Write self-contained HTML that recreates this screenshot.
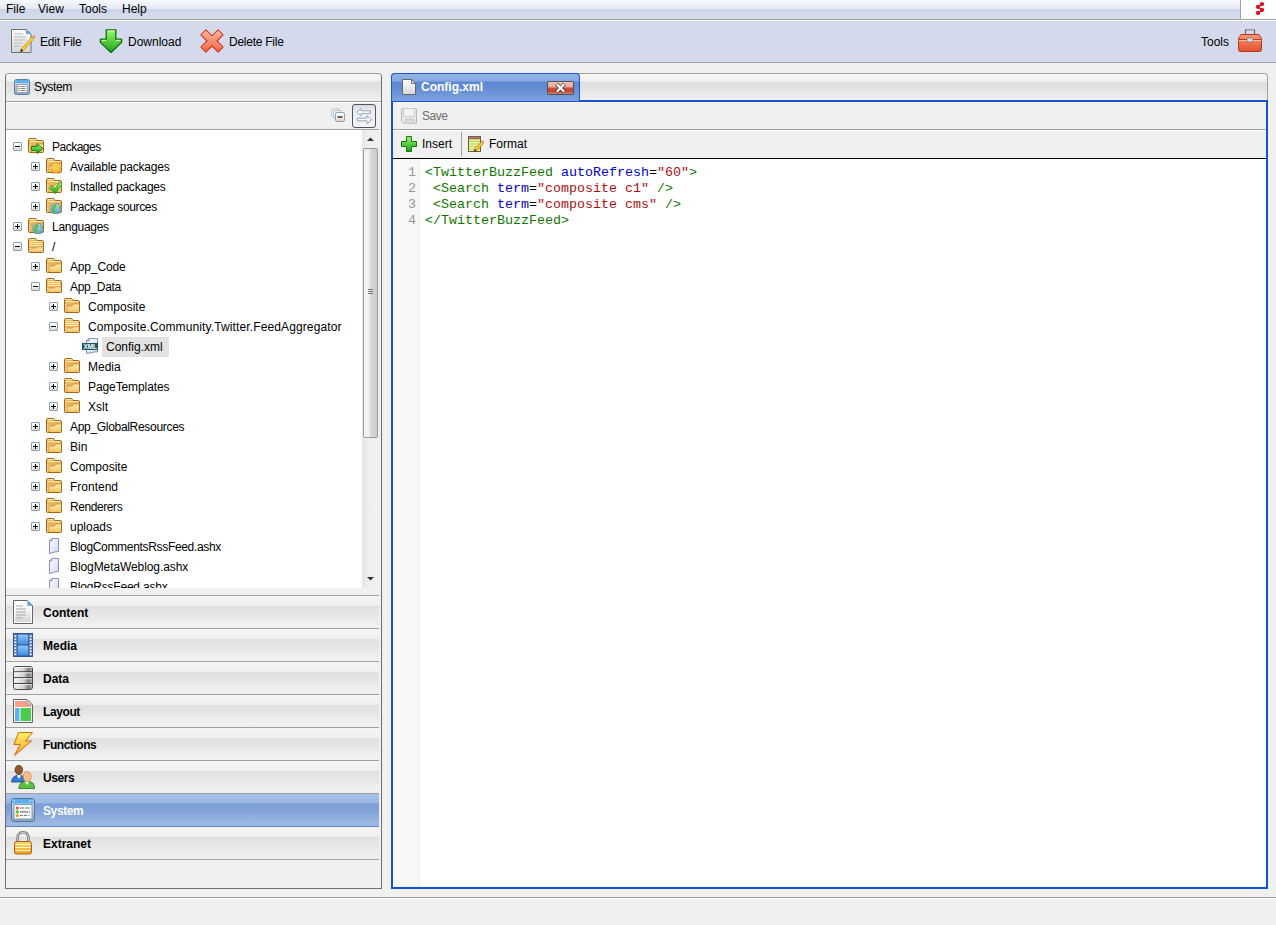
<!DOCTYPE html><html><head><meta charset="utf-8"><title>Composite C1</title><style>
*{box-sizing:border-box;}
html,body{margin:0;padding:0;}
body{width:1276px;height:925px;overflow:hidden;background:#f0f0f0;position:relative;font-family:"Liberation Sans",sans-serif;font-size:12px;color:#000;}
.a{position:absolute;display:block;}
.t{position:absolute;white-space:nowrap;line-height:14px;}
#menubar{left:0;top:0;width:1276px;height:19px;background:linear-gradient(#f7f9fc 0px,#e3e8f3 9px,#cbd4e8 9px,#d6ddee 18px);}
#menuline{left:0;top:19px;width:1276px;height:1px;background:#a2a2a2;}
#menuline2{left:0;top:20px;width:1276px;height:1px;background:#fff;}
#toolbar{left:0;top:21px;width:1276px;height:41px;background:#d4daeb;}
#toolline{left:0;top:62px;width:1276px;height:1px;background:#a0a0a0;}
#logo{left:1240px;top:0;width:36px;height:19px;background:#fdfdfd;border-left:1px solid #a0a0a0;}

#lp{left:5px;top:73px;width:377px;height:816px;border:1px solid #6e6e6e;border-top-color:#9c9c9c;border-radius:4px 4px 0 0;background:#f0f0f0;}
#lphead{left:6px;top:74px;width:375px;height:27px;background:linear-gradient(#f7f7f7 0px,#f1f1f1 7px,#dedede 8px,#e2e2e2 14px,#ececec 22px,#f0f0f0 27px);border-radius:3px 3px 0 0;}
#lpheadline{left:6px;top:101px;width:375px;height:1px;background:#a0a0a0;}
#treetb{left:6px;top:102px;width:375px;height:27px;background:#f0f0f0;border-top:1px solid #fff;}
#treetbline{left:6px;top:129px;width:373px;height:1px;background:#a0a0a0;}
#tree{left:6px;top:130px;width:373px;height:458px;background:#fff;overflow:hidden;}
#sb{left:362px;top:130px;width:17px;height:458px;background:linear-gradient(90deg,#e6e6e6,#efefef 40%,#f0f0f0);}
#thumb{left:363px;top:148px;width:15px;height:290px;border:1px solid #9c9c9c;border-radius:2px;background:linear-gradient(90deg,#f4f4f4 0,#ececec 45%,#dadada 50%,#cbcbcb 100%);}
.tog{position:absolute;width:9px;height:9px;border:1px solid #8aa2bd;border-radius:1px;background:linear-gradient(#fff,#fbfaf7 45%,#ddd3bf);}
.tog:before{content:"";position:absolute;left:1px;top:3px;width:5px;height:1px;background:#000;}
.tog.p:after{content:"";position:absolute;left:3px;top:1px;width:1px;height:5px;background:#000;}
.sel{position:absolute;background:#e3e3e3;height:20px;}

.acc{position:absolute;left:6px;width:373px;height:32px;background:linear-gradient(#f5f5f5 0px,#efefef 10px,#e0e0e0 10px,#e5e5e5 17px,#efefef 27px,#f1f1f1 32px);}
.accl{position:absolute;left:6px;width:373px;height:1px;background:#a0a0a0;}
.acct{position:absolute;left:43px;font-weight:bold;white-space:nowrap;line-height:14px;}

#rstrip{left:391px;top:73px;width:877px;height:29px;border:1px solid #a0a0a0;border-bottom:none;border-radius:4px 4px 0 0;background:linear-gradient(#f7f7f7 0px,#f1f1f1 7px,#dedede 8px,#e2e2e2 14px,#ececec 22px,#f0f0f0 27px);}
#tab{left:391px;top:73px;width:189px;height:28px;border:1px solid #1a56d6;border-bottom:none;border-radius:4px 4px 0 0;background:linear-gradient(#93b4e6 0px,#87a9e0 7px,#5b88d0 8px,#6690d4 16px,#7fa4de 27px);}
#frame{left:391px;top:100px;width:877px;height:789px;border:2px solid #1254d8;background:#f0f0f0;}
#savetb{left:393px;top:102px;width:873px;height:27px;background:#f0f0f0;border-top:1px solid #fff;}
#savetbline{left:393px;top:129px;width:873px;height:1px;background:#a0a0a0;}
#instb{left:393px;top:130px;width:873px;height:28px;background:#f0f0f0;border-top:1px solid #fff;}
#insline{left:393px;top:158px;width:873px;height:1px;background:#000;}
#sep{left:461px;top:132px;width:1px;height:24px;background:#a0a0a0;}
#code{left:393px;top:159px;width:873px;height:728px;background:#fff;}
#gutter{left:393px;top:159px;width:27px;height:728px;background:#f7f7f7;border-right:1px solid #eeeeee;}
#closebtn{left:547px;top:81px;width:27px;height:14px;border:1px solid #4c5260;border-radius:2px;background:linear-gradient(#f4c4b6 0px,#e9a595 5px,#cc5039 6px,#c24530 9px,#d98271 12px);}
.ln{position:absolute;left:393px;width:23px;text-align:right;color:#999;font-family:"Liberation Mono",monospace;font-size:13.33px;line-height:16px;}
.cl{position:absolute;left:425px;white-space:pre;font-family:"Liberation Mono",monospace;font-size:13.33px;line-height:16px;color:#000;}
.tg{color:#170;} .at{color:#00c;} .st{color:#a11;}
#statusline{left:0;top:897px;width:1276px;height:1px;background:#a0a0a0;}
#statusline2{left:0;top:898px;width:1276px;height:1px;background:#fff;}
#pressbtn{left:352px;top:104px;width:24px;height:24px;border:1px solid #4d5462;border-radius:3px;background:linear-gradient(#d9d9d9,#f0f0f0 30%,#f2f2f2);}
</style></head><body>

<svg width="0" height="0" style="position:absolute">
<defs>
<linearGradient id="gFd" x1="0" y1="0" x2="0" y2="1"><stop offset="0" stop-color="#f4cb78"/><stop offset="1" stop-color="#d8963a"/></linearGradient>
<linearGradient id="gFf" x1="0" y1="0" x2="0" y2="1"><stop offset="0" stop-color="#fdeeb4"/><stop offset="1" stop-color="#f2c264"/></linearGradient>
<linearGradient id="gTog" x1="0" y1="0" x2="0" y2="1"><stop offset="0" stop-color="#ffffff"/><stop offset="0.5" stop-color="#f6f4ef"/><stop offset="1" stop-color="#d9cfb9"/></linearGradient>
<linearGradient id="gGreen" x1="0" y1="0" x2="0" y2="1"><stop offset="0" stop-color="#9cf56a"/><stop offset="1" stop-color="#19a51a"/></linearGradient>
<linearGradient id="gRed" x1="0" y1="0" x2="0" y2="1"><stop offset="0" stop-color="#fcb39a"/><stop offset="1" stop-color="#ee6a45"/></linearGradient>
<linearGradient id="gDoc" x1="0" y1="0" x2="0" y2="1"><stop offset="0" stop-color="#ffffff"/><stop offset="1" stop-color="#d6d6d6"/></linearGradient>
<linearGradient id="gBlueDoc" x1="0" y1="0" x2="1" y2="1"><stop offset="0" stop-color="#ffffff"/><stop offset="1" stop-color="#cfd6f2"/></linearGradient>
<linearGradient id="gBox" x1="0" y1="0" x2="0" y2="1"><stop offset="0" stop-color="#f9977a"/><stop offset="1" stop-color="#e5502e"/></linearGradient>
<linearGradient id="gSun" x1="0" y1="0" x2="0" y2="1"><stop offset="0" stop-color="#ffe27a"/><stop offset="1" stop-color="#f9b02c"/></linearGradient>
<linearGradient id="gGlobe" x1="0" y1="0" x2="0" y2="1"><stop offset="0" stop-color="#c4e2fa"/><stop offset="1" stop-color="#5a92d8"/></linearGradient>
<linearGradient id="gFilm" x1="0" y1="0" x2="0" y2="1"><stop offset="0" stop-color="#8ec6f2"/><stop offset="1" stop-color="#3f8fdc"/></linearGradient>
<linearGradient id="gData" x1="0" y1="0" x2="1" y2="0"><stop offset="0" stop-color="#f4f4f4"/><stop offset="0.55" stop-color="#d0d0d0"/><stop offset="0.8" stop-color="#7c7c7c"/><stop offset="1" stop-color="#bdbdbd"/></linearGradient>
<linearGradient id="gBolt" x1="0" y1="0" x2="0" y2="1"><stop offset="0" stop-color="#fff06a"/><stop offset="1" stop-color="#f5a21e"/></linearGradient>
<linearGradient id="gLock" x1="0" y1="0" x2="0" y2="1"><stop offset="0" stop-color="#ffd86a"/><stop offset="1" stop-color="#f0a21a"/></linearGradient>
<linearGradient id="gSys" x1="0" y1="0" x2="0" y2="1"><stop offset="0" stop-color="#d9e6f5"/><stop offset="1" stop-color="#8ea6c0"/></linearGradient>
<linearGradient id="gClose" x1="0" y1="0" x2="0" y2="1"><stop offset="0" stop-color="#e07c6a"/><stop offset="0.5" stop-color="#c9432e"/><stop offset="0.55" stop-color="#b8331f"/><stop offset="1" stop-color="#d5614c"/></linearGradient>

<symbol id="folder" viewBox="0 0 16 16">
 <path d="M0.5,2 Q0.5,0.5 2,0.5 H7 Q8,0.5 8.5,1.5 L9,2.5 H14 Q15.5,2.5 15.5,4 V13.5 Q15.5,14.5 14.5,14.5 H1.5 Q0.5,14.5 0.5,13.5 Z" fill="#eab354" stroke="#a8661a"/>
 <path d="M1.5,1.6 H7.6 M1.5,3.6 H14.5" stroke="#fff1bd" stroke-width="1"/>
 <path d="M3,8 H8.2 L9.8,6 H15 V14 H3 Z" fill="url(#gFf)"/>
 <path d="M3,8 H8.2 L9.8,6 H15" fill="none" stroke="#c98a34" stroke-width="0.8"/>
 <path d="M3,8.5 V14" stroke="#c98a34" stroke-width="0.6"/>
 <path d="M1.8,6 v1 M1.8,8 v1 M1.8,10 v1 M1.8,12 v1" stroke="#fffbe8" stroke-width="1"/>
</symbol>
<symbol id="folderopen" viewBox="0 0 16 16">
 <path d="M0.5,2 Q0.5,0.5 2,0.5 H7 Q8,0.5 8.5,1.5 L9,2.5 H14 Q15.5,2.5 15.5,4 V13.5 Q15.5,14.5 14.5,14.5 H1.5 Q0.5,14.5 0.5,13.5 Z" fill="#eab354" stroke="#a8661a"/>
 <path d="M1.5,1.6 H7.6 M1.5,3.6 H14.5 M1.5,5.6 H14.5 M1.5,7.6 H14.5" stroke="#fff1bd" stroke-width="1"/>
 <path d="M3,10 H8.2 L9.8,8.8 H15 V14 H3 Z" fill="url(#gFf)"/>
 <path d="M3,10 H8.2 L9.8,8.8 H15" fill="none" stroke="#c98a34" stroke-width="0.8"/>
 <path d="M1.8,10 v1 M1.8,12 v1" stroke="#fffbe8" stroke-width="1"/>
</symbol>
<symbol id="ovArrow" viewBox="0 0 16 16">
 <path d="M3.5,8.5 H9 V5.5 L15,10.5 L9,15.5 V12.5 H3.5 Z" fill="url(#gGreen)" stroke="#0f7d12" stroke-width="0.9" stroke-linejoin="round"/>
</symbol>
<symbol id="ovSun" viewBox="0 0 16 16">
 <path d="M10,3.5 L11.2,5.8 L13.7,5 L13.4,7.6 L15.8,8.8 L14,10.6 L15.3,12.9 L12.7,13.3 L12.2,15.9 L10,14.6 L7.8,15.9 L7.3,13.3 L4.7,12.9 L6,10.6 L4.2,8.8 L6.6,7.6 L6.3,5 L8.8,5.8 Z" fill="url(#gSun)" stroke="#f08a1a" stroke-width="0.6"/>
</symbol>
<symbol id="ovCheck" viewBox="0 0 16 16">
 <path d="M3.2,10.2 L6.3,7.6 L9,10.8 L13.8,3.6 L16.2,6.2 L9.3,15.8 Z" fill="url(#gGreen)" stroke="#178a1c" stroke-width="0.6" stroke-linejoin="round"/>
</symbol>
<symbol id="ovGlobe" viewBox="0 0 16 16">
 <circle cx="10" cy="11" r="5.4" fill="url(#gGlobe)" stroke="#4f7fb8" stroke-width="0.7"/>
 <path d="M6.2,9.5 Q7,6.5 9.5,6 Q11.5,6.8 10.8,8.2 Q9.2,8.6 9.6,10 Q8.4,10.8 9,12.5 Q10.2,13.8 9.4,15.8 Q7,15 5.5,12.6 Q6.8,11.5 6.2,9.5 Z M12.4,7 Q15,8 15.2,10.5 Q14,11.6 13.2,10.6 Q12.2,9.2 12.4,7 Z M12.8,13 Q14,12.6 14.4,13.6 Q13.6,15 12.6,15.2 Z" fill="#5cc03c"/>
</symbol>
<symbol id="xmlfile" viewBox="0 0 16 16">
 <path d="M4.5,3 L7,0.5 H15.5 V14 Q13,13.5 10,14.5 L4.5,15.5 Z" fill="url(#gBlueDoc)" stroke="#6f78a8" stroke-width="0.8"/>
 <path d="M4.5,3 L7,0.5 V3 Z" fill="#9fb4e6" stroke="#6f78a8" stroke-width="0.6"/>
 <rect x="0" y="5" width="16" height="7" fill="#1d5965"/>
 <text x="8.2" y="11.2" font-family="Liberation Sans" font-weight="bold" font-size="6.4" fill="#fff" text-anchor="middle">XML</text>
</symbol>
<symbol id="blankfile" viewBox="0 0 16 16">
 <path d="M3.5,3 L6,0.5 H12.5 V13.5 Q9,13.5 3.5,15.5 Z" fill="url(#gBlueDoc)" stroke="#7c85b8" stroke-width="0.9"/>
 <path d="M3.5,3 L6,0.5 V3 Z" fill="#b6c8ee" stroke="#7c85b8" stroke-width="0.6"/>
</symbol>

<symbol id="editfile" viewBox="0 0 24 24">
 <path d="M0.5,0.5 H15 L20,5 V23.5 H0.5 Z" fill="url(#gDoc)" stroke="#707070"/>
 <path d="M15,0.5 L20,5 H15 Z" fill="#5aa8e8"/>
 <path d="M3,5 H12 M3,8 H15 M3,11 H15 M3,14 H12 M3,17 H9" stroke="#b9b9b9" stroke-width="1"/>
 <path d="M10.2,19.8 L21,7.8 L23,9.8 L12.2,21.8 L9.3,22.9 Z" fill="#f7c933" stroke="#9a7410" stroke-width="0.5"/>
 <path d="M21,7.8 L22.3,6.4 Q23.4,5.6 24,6.6 V8.6 L23,9.8 Z" fill="#ee8e8e"/>
 <path d="M10.2,19.8 L9.3,22.9 L12.2,21.8 Z" fill="#222"/>
</symbol>
<symbol id="download" viewBox="0 0 24 24">
 <path d="M7.2,0.8 H16.8 V10.2 H22.6 V13.4 L12,23.6 L1.4,13.4 V10.2 H7.2 Z" fill="url(#gGreen)" stroke="#0a6a0a" stroke-width="1.3" stroke-linejoin="round"/>
 <path d="M8.2,2 H15.8 M2.5,11.4 H7 M17,11.4 H21.5" stroke="#f4ffc8" stroke-width="0.9"/>
</symbol>
<symbol id="delete" viewBox="0 0 24 24">
 <path d="M0.9,5.9 L5.9,0.9 L12,7 L18.1,0.9 L23.1,5.9 L17,12 L23.1,18.1 L18.1,23.1 L12,17 L5.9,23.1 L0.9,18.1 L7,12 Z" fill="url(#gRed)" stroke="#d9301c" stroke-width="1.1" stroke-linejoin="round"/>
 <path d="M2.3,5.9 L5.9,2.3 L12,8.4 L18.1,2.3 L21.7,5.9 M2.3,18.1 L7,13.4 M21.7,18.1 L17,13.4" fill="none" stroke="#fff" stroke-width="0.6" stroke-dasharray="1 0.7"/>
</symbol>
<symbol id="toolbox" viewBox="0 0 24 24">
 <path d="M7.5,6.5 V2 H16.5 V6.5" fill="none" stroke="#666" stroke-width="1.2"/>
 <path d="M8.5,3 H15.5 V6" fill="none" stroke="#ddd" stroke-width="0.7"/>
 <path d="M3,6.5 H21 L23.5,10.5 V21.5 Q23.5,23.5 21.5,23.5 H2.5 Q0.5,23.5 0.5,21.5 V10.5 Z" fill="url(#gBox)" stroke="#b13a1e"/>
 <path d="M0.8,11.5 H23.2" stroke="#b13a1e" stroke-width="0.9"/>
 <path d="M0.8,12.5 H23.2" stroke="#fdd6c6" stroke-width="0.8"/>
 <rect x="9" y="10" width="6" height="4" rx="1.5" fill="#ddd" stroke="#777" stroke-width="0.8"/>
</symbol>
<symbol id="sys16" viewBox="0 0 16 16">
 <rect x="0.5" y="0.5" width="15" height="15" rx="2" fill="url(#gSys)" stroke="#5e7c9c"/>
 <rect x="1" y="1" width="14" height="3" rx="1" fill="#5fb0ee"/>
 <rect x="3" y="5.5" width="10" height="8" fill="#fff" stroke="#7d93ad" stroke-width="0.8"/>
 <path d="M4,7.5 h1.5 M4,9.5 h1.5 M4,11.5 h1.5" stroke-width="1" stroke="#e04a2a"/>
 <path d="M4,9.5 h1.5" stroke-width="1" stroke="#3cc63a"/>
 <path d="M4,11.5 h1.5" stroke-width="1" stroke="#f08a1a"/>
 <path d="M6.5,7.5 h5 M6.5,9.5 h5 M6.5,11.5 h5" stroke-width="1" stroke="#888"/>
</symbol>
<symbol id="sys24" viewBox="0 0 24 24">
 <rect x="0.5" y="0.5" width="23" height="23" rx="2.5" fill="url(#gSys)" stroke="#5a7896"/>
 <rect x="1" y="1" width="22" height="4.5" rx="1.5" fill="#5aaef0"/>
 <path d="M2.5,3 h1.5 M18,3 h1.5 M20.5,3 h1.5" stroke="#e8f4ff" stroke-width="1.2"/>
 <rect x="3" y="6.5" width="18" height="14.5" fill="#fafafa" stroke="#7d93ad" stroke-width="0.9"/>
 <circle cx="6.3" cy="10" r="1.6" fill="#e5503a"/><circle cx="6.3" cy="13.8" r="1.6" fill="#3cc23c"/><circle cx="6.3" cy="17.5" r="1.6" fill="#f0901e"/>
 <path d="M9,10 h4 M14,10 h4.5 M9,13.8 h8 M18,13.8 h1 M9,17.5 h3 M13,17.5 h3 M17.5,17.5 h1" stroke-width="1.2" stroke="#777"/>
</symbol>
<symbol id="collapse" viewBox="0 0 16 16">
 <rect x="1.5" y="1.5" width="8" height="8" rx="1.5" fill="none" stroke="#b3c6da" stroke-width="0.8"/>
 <rect x="3.5" y="3.5" width="8" height="8" rx="1.5" fill="#f4f6f9" stroke="#a0b6cf" stroke-width="0.8"/>
 <rect x="5.5" y="5.5" width="9" height="9" rx="1.5" fill="url(#gTog)" stroke="#7f9dc0" stroke-width="0.9"/>
 <path d="M7.5,10 H12.5" stroke="#000" stroke-width="1.2"/>
</symbol>
<symbol id="swap" viewBox="0 0 16 16">
 <path d="M0.6,4.1 L5,0.4 V2.8 H14.5 V5.4 H5 V7.8 Z" fill="#fff" stroke="#7d9cbf" stroke-width="0.9" stroke-linejoin="miter"/>
 <path d="M15.6,11.6 L11,7.6 V10.2 H1.2 V12.8 H11 V15.6 Z" fill="#fff" stroke="#7d9cbf" stroke-width="0.9" stroke-linejoin="miter"/>
</symbol>
<symbol id="floppy" viewBox="0 0 16 16">
 <path d="M1.5,0.5 H14.5 Q15.5,0.5 15.5,1.5 V15.5 H2.5 L0.5,13.5 V1.5 Q0.5,0.5 1.5,0.5 Z" fill="#e9e9e9" stroke="#b9b9b9"/>
 <rect x="2.5" y="0.5" width="11" height="8" fill="#f3f3f3" stroke="#c4c4c4" stroke-width="0.8"/>
 <path d="M4,15.5 V12 Q4,11 5,11 H12 Q13,11 13,12 V15.5" fill="#dadada" stroke="#c4c4c4" stroke-width="0.8"/>
</symbol>
<symbol id="plus" viewBox="0 0 16 16">
 <path d="M5.5,0.5 H10.5 V5.5 H15.5 V10.5 H10.5 V15.5 H5.5 V10.5 H0.5 V5.5 H5.5 Z" fill="url(#gGreen)" stroke="#0e7a10" stroke-width="1" stroke-linejoin="round"/>
</symbol>
<symbol id="format" viewBox="0 0 16 16">
 <rect x="0.5" y="0.5" width="12" height="15" fill="#f4f59a" stroke="#6e5a3a"/>
 <rect x="0.5" y="0.5" width="12" height="2.5" fill="#a87a6a" stroke="#6e5a3a" stroke-width="0.6"/>
 <path d="M1,5.5 H12 M1,8 H12 M1,10.5 H12 M1,13 H12" stroke="#9ccf6a" stroke-width="0.8"/>
 <path d="M6.5,13 L13.5,5.5 L15.5,7.5 L8.5,15 L6,15.5 Z" fill="#f5c52b" stroke="#8a6a10" stroke-width="0.5"/>
 <path d="M13.5,5.5 L14.5,4.5 Q15.5,4 16,5 L15.5,7.5 Z" fill="#ec8f8f"/>
 <path d="M6.5,13 L6,15.5 L8.5,15 Z" fill="#222"/>
</symbol>
<symbol id="tabdoc" viewBox="0 0 16 16">
 <path d="M1.5,0.5 H10.5 L14.5,4.5 V15.5 H1.5 Z" fill="url(#gDoc)" stroke="#666" stroke-linejoin="miter"/>
 <path d="M10.5,0.5 V4.5 H14.5 Z" fill="#e6e6e6" stroke="#666" stroke-width="0.9"/>
</symbol>
<symbol id="content24" viewBox="0 0 24 24">
 <path d="M2.5,0.5 H16.5 L21.5,5.5 V23.5 H2.5 Z" fill="#fff" stroke="#666"/>
 <rect x="4" y="6" width="16" height="16" fill="url(#gDoc)"/>
 <path d="M16.5,0.5 L21.8,5.8 H16.5 Z" fill="#4a9ae0"/>
 <path d="M17,1.3 L21,5.3" stroke="#dff0ff" stroke-width="0.7" stroke-dasharray="0.8 0.6"/>
 <path d="M5,6 H12 M5,9 H15 M5,12 H15 M5,15 H15 M5,18 H12" stroke="#a9a9a9" stroke-width="1"/>
</symbol>
<symbol id="media24" viewBox="0 0 24 24">
 <rect x="2.5" y="0.5" width="19" height="23" fill="#5a7cc0" stroke="#33529a"/>
 <rect x="6.2" y="1" width="11.6" height="22" fill="#33529a"/>
 <rect x="6.8" y="1.6" width="10.4" height="9.8" rx="1.2" fill="url(#gFilm)"/>
 <rect x="6.8" y="12.4" width="10.4" height="10" rx="1.2" fill="url(#gFilm)"/>
 <path d="M4.3,2.6 v1.5 M4.3,5.6 v1.5 M4.3,8.6 v1.5 M4.3,11.6 v1.5 M4.3,14.6 v1.5 M4.3,17.6 v1.5 M4.3,20.6 v1.5 M19.7,2.6 v1.5 M19.7,5.6 v1.5 M19.7,8.6 v1.5 M19.7,11.6 v1.5 M19.7,14.6 v1.5 M19.7,17.6 v1.5 M19.7,20.6 v1.5" stroke="#fff" stroke-width="1.8"/>
</symbol>
<symbol id="data24" viewBox="0 0 24 24">
 <rect x="2.5" y="0.5" width="19" height="23" rx="2.5" fill="url(#gData)" stroke="#4a4a4a"/>
 <path d="M3,5.8 H21 M3,11.7 H21 M3,17.6 H21" stroke="#333" stroke-width="1"/>
 <path d="M3.5,6.8 H20.5 M3.5,12.7 H20.5 M3.5,18.6 H20.5 M3.5,1.5 H20.5" stroke="#fff" stroke-width="0.8"/>
</symbol>
<symbol id="layout24" viewBox="0 0 24 24">
 <path d="M2.5,0.5 H16 L21.5,6 V23.5 H2.5 Z" fill="#fff" stroke="#666"/>
 <rect x="4" y="2" width="16" height="6" fill="#fba08a"/>
 <rect x="4" y="9" width="4.5" height="13" fill="#5fb1f0"/>
 <rect x="9.5" y="9" width="10.5" height="13" fill="#4ccc4c"/>
 <path d="M16,0.5 L21.5,6 H16 Z" fill="#cfcfcf" stroke="#888" stroke-width="0.6"/>
</symbol>
<symbol id="bolt24" viewBox="0 0 24 24">
 <path d="M7.5,0.5 H21.5 L14.5,9 H20.5 L3.5,23.5 L9,12.5 H3 Z" fill="url(#gBolt)" stroke="#d46a14" stroke-linejoin="round"/>
</symbol>
<symbol id="users24" viewBox="0 0 24 24">
 <path d="M0.6,17 Q1,10.5 8,10 Q14.5,10.5 15,17 Z" fill="#2f7ed0" stroke="#173f80" stroke-width="0.8"/>
 <path d="M5.8,10.3 L8,14 L10.2,10.3 Z" fill="#fff"/>
 <ellipse cx="7.8" cy="4.9" rx="3.9" ry="4.6" fill="#8c5a2c" stroke="#4a2a0c" stroke-width="0.6"/>
 <path d="M7.8,23.6 Q8.2,16.3 16,16 Q23.5,16.3 23.8,23.6 Z" fill="#5bc246" stroke="#1d6e14" stroke-width="0.8"/>
 <path d="M13.5,16.2 L16,20 L18.5,16.2 Z" fill="#fff"/>
 <ellipse cx="16.1" cy="11.6" rx="4" ry="5.1" fill="#fbbf80" stroke="#b0702a" stroke-width="0.6"/>
</symbol>
<symbol id="lock24" viewBox="0 0 24 24">
 <path d="M6.5,11 V8 Q6.5,1.3 12,1.3 Q17.5,1.3 17.5,8 V11" fill="none" stroke="#777" stroke-width="2.6"/>
 <path d="M6.5,11 V8 Q6.5,1.3 12,1.3 Q17.5,1.3 17.5,8 V11" fill="none" stroke="#d8d8d8" stroke-width="0.9"/>
 <rect x="3.5" y="10.5" width="17" height="12.5" rx="2" fill="url(#gLock)" stroke="#b0601a"/>
 <path d="M4.5,13.5 H19.5 M4.5,16.5 H19.5 M4.5,19.5 H19.5" stroke="#fff6c8" stroke-width="1.1"/>
</symbol>
<symbol id="c1logo" viewBox="0 0 12 16">
 <path d="M8,3.1 L4,5.9 L8,9 L4,12" fill="none" stroke="#d7141f" stroke-width="1.5"/>
 <circle cx="8" cy="3.1" r="2.15" fill="#d7141f"/><circle cx="4" cy="5.9" r="2.15" fill="#d7141f"/>
 <circle cx="8" cy="9" r="2.15" fill="#d7141f"/><circle cx="4" cy="12" r="2.15" fill="#d7141f"/>
</symbol>
</defs></svg>

<div class="a" id="menubar"></div><div class="a" id="menuline"></div><div class="a" id="menuline2"></div>
<div class="a" id="logo"></div>
<svg class="a" style="left:1254px;top:1px;width:12px;height:16px;"><use href="#c1logo"/></svg>
<div class="t" style="left:6px;top:2px;">File</div>
<div class="t" style="left:38px;top:2px;">View</div>
<div class="t" style="left:79px;top:2px;">Tools</div>
<div class="t" style="left:122px;top:2px;">Help</div>
<div class="a" id="toolbar"></div><div class="a" id="toolline"></div>
<svg class="a" style="left:11px;top:29px;width:24px;height:24px;"><use href="#editfile"/></svg>
<div class="t" style="left:40px;top:35px;letter-spacing:-0.2px;">Edit File</div>
<svg class="a" style="left:99px;top:29px;width:24px;height:24px;"><use href="#download"/></svg>
<div class="t" style="left:128px;top:35px;">Download</div>
<svg class="a" style="left:200px;top:29px;width:24px;height:24px;"><use href="#delete"/></svg>
<div class="t" style="left:229px;top:35px;letter-spacing:-0.25px;">Delete File</div>
<div class="t" style="left:1201px;top:35px;">Tools</div>
<svg class="a" style="left:1238px;top:28px;width:24px;height:24px;"><use href="#toolbox"/></svg>
<div class="a" id="lp"></div><div class="a" id="lphead"></div><div class="a" id="lpheadline"></div>
<svg class="a" style="left:14px;top:79px;width:16px;height:16px;"><use href="#sys16"/></svg>
<div class="t" style="left:34px;top:80px;letter-spacing:-0.33px;">System</div>
<div class="a" id="treetb"></div><div class="a" id="treetbline"></div>
<svg class="a" style="left:330px;top:107px;width:16px;height:16px;"><use href="#collapse"/></svg>
<div class="a" id="pressbtn"></div>
<svg class="a" style="left:356px;top:108px;width:16px;height:16px;"><use href="#swap"/></svg>
<div class="a" id="tree"><div class="tog" style="left:7px;top:12px"></div><svg class="a" style="left:22px;top:8px;width:16px;height:16px"><use href="#folder"/></svg><svg class="a" style="left:22px;top:8px;width:16px;height:16px"><use href="#ovArrow"/></svg><div class="t" style="left:46px;top:10px;letter-spacing:-0.5px">Packages</div><div class="tog p" style="left:25px;top:32px"></div><svg class="a" style="left:40px;top:28px;width:16px;height:16px"><use href="#folder"/></svg><svg class="a" style="left:40px;top:28px;width:16px;height:16px"><use href="#ovSun"/></svg><div class="t" style="left:64px;top:30px;letter-spacing:-0.2px">Available packages</div><div class="tog p" style="left:25px;top:52px"></div><svg class="a" style="left:40px;top:48px;width:16px;height:16px"><use href="#folder"/></svg><svg class="a" style="left:40px;top:48px;width:16px;height:16px"><use href="#ovCheck"/></svg><div class="t" style="left:64px;top:50px;letter-spacing:-0.21px">Installed packages</div><div class="tog p" style="left:25px;top:72px"></div><svg class="a" style="left:40px;top:68px;width:16px;height:16px"><use href="#folder"/></svg><svg class="a" style="left:40px;top:68px;width:16px;height:16px"><use href="#ovGlobe"/></svg><div class="t" style="left:64px;top:70px;letter-spacing:-0.35px">Package sources</div><div class="tog p" style="left:7px;top:92px"></div><svg class="a" style="left:22px;top:88px;width:16px;height:16px"><use href="#folder"/></svg><svg class="a" style="left:22px;top:88px;width:16px;height:16px"><use href="#ovGlobe"/></svg><div class="t" style="left:46px;top:90px;letter-spacing:-0.29px">Languages</div><div class="tog" style="left:7px;top:112px"></div><svg class="a" style="left:22px;top:108px;width:16px;height:16px"><use href="#folderopen"/></svg><div class="t" style="left:46px;top:110px">/</div><div class="tog p" style="left:25px;top:132px"></div><svg class="a" style="left:40px;top:128px;width:16px;height:16px"><use href="#folder"/></svg><div class="t" style="left:64px;top:130px;letter-spacing:-0.16px">App_Code</div><div class="tog" style="left:25px;top:152px"></div><svg class="a" style="left:40px;top:148px;width:16px;height:16px"><use href="#folderopen"/></svg><div class="t" style="left:64px;top:150px;letter-spacing:-0.3px">App_Data</div><div class="tog p" style="left:43px;top:172px"></div><svg class="a" style="left:58px;top:168px;width:16px;height:16px"><use href="#folder"/></svg><div class="t" style="left:82px;top:170px">Composite</div><div class="tog" style="left:43px;top:192px"></div><svg class="a" style="left:58px;top:188px;width:16px;height:16px"><use href="#folderopen"/></svg><div class="t" style="left:82px;top:190px;letter-spacing:0.12px">Composite.Community.Twitter.FeedAggregator</div><div class="sel" style="left:96px;top:207px;width:67px"></div><svg class="a" style="left:76px;top:208px;width:16px;height:16px"><use href="#xmlfile"/></svg><div class="t" style="left:100px;top:210px">Config.xml</div><div class="tog p" style="left:43px;top:232px"></div><svg class="a" style="left:58px;top:228px;width:16px;height:16px"><use href="#folder"/></svg><div class="t" style="left:82px;top:230px">Media</div><div class="tog p" style="left:43px;top:252px"></div><svg class="a" style="left:58px;top:248px;width:16px;height:16px"><use href="#folder"/></svg><div class="t" style="left:82px;top:250px;letter-spacing:-0.1px">PageTemplates</div><div class="tog p" style="left:43px;top:272px"></div><svg class="a" style="left:58px;top:268px;width:16px;height:16px"><use href="#folder"/></svg><div class="t" style="left:82px;top:270px">Xslt</div><div class="tog p" style="left:25px;top:292px"></div><svg class="a" style="left:40px;top:288px;width:16px;height:16px"><use href="#folder"/></svg><div class="t" style="left:64px;top:290px;letter-spacing:-0.31px">App_GlobalResources</div><div class="tog p" style="left:25px;top:312px"></div><svg class="a" style="left:40px;top:308px;width:16px;height:16px"><use href="#folder"/></svg><div class="t" style="left:64px;top:310px">Bin</div><div class="tog p" style="left:25px;top:332px"></div><svg class="a" style="left:40px;top:328px;width:16px;height:16px"><use href="#folder"/></svg><div class="t" style="left:64px;top:330px">Composite</div><div class="tog p" style="left:25px;top:352px"></div><svg class="a" style="left:40px;top:348px;width:16px;height:16px"><use href="#folder"/></svg><div class="t" style="left:64px;top:350px">Frontend</div><div class="tog p" style="left:25px;top:372px"></div><svg class="a" style="left:40px;top:368px;width:16px;height:16px"><use href="#folder"/></svg><div class="t" style="left:64px;top:370px;letter-spacing:-0.42px">Renderers</div><div class="tog p" style="left:25px;top:392px"></div><svg class="a" style="left:40px;top:388px;width:16px;height:16px"><use href="#folder"/></svg><div class="t" style="left:64px;top:390px">uploads</div><svg class="a" style="left:40px;top:408px;width:16px;height:16px"><use href="#blankfile"/></svg><div class="t" style="left:64px;top:410px;letter-spacing:-0.32px">BlogCommentsRssFeed.ashx</div><svg class="a" style="left:40px;top:428px;width:16px;height:16px"><use href="#blankfile"/></svg><div class="t" style="left:64px;top:430px;letter-spacing:-0.09px">BlogMetaWeblog.ashx</div><svg class="a" style="left:40px;top:448px;width:16px;height:16px"><use href="#blankfile"/></svg><div class="t" style="left:64px;top:450px;letter-spacing:-0.2px">BlogRssFeed.ashx</div></div>
<div class="a" id="sb"></div><div class="a" id="thumb"></div>
<svg class="a" style="left:363px;top:134px;width:15px;height:10px"><path d="M4,7 L7.5,3.5 L11,7 Z" fill="#333"/></svg>
<svg class="a" style="left:363px;top:574px;width:15px;height:10px"><path d="M4,3 L7.5,6.5 L11,3 Z" fill="#333"/></svg>
<svg class="a" style="left:363px;top:287px;width:15px;height:10px"><path d="M5,2.5 H10 M5,4.5 H10 M5,6.5 H10" stroke="#777" stroke-width="1"/></svg>
<div class="accl" style="top:595px;"></div>
<div class="acc" style="top:596px"></div>
<div class="acct" style="top:606px;letter-spacing:0px">Content</div>
<svg class="a" style="left:11px;top:600px;width:24px;height:24px;"><use href="#content24"/></svg>
<div class="accl" style="top:628px;"></div>
<div class="acc" style="top:629px"></div>
<div class="acct" style="top:639px;letter-spacing:0px">Media</div>
<svg class="a" style="left:11px;top:633px;width:24px;height:24px;"><use href="#media24"/></svg>
<div class="accl" style="top:661px;"></div>
<div class="acc" style="top:662px"></div>
<div class="acct" style="top:672px;letter-spacing:0px">Data</div>
<svg class="a" style="left:11px;top:666px;width:24px;height:24px;"><use href="#data24"/></svg>
<div class="accl" style="top:694px;"></div>
<div class="acc" style="top:695px"></div>
<div class="acct" style="top:705px;letter-spacing:-0.4px">Layout</div>
<svg class="a" style="left:11px;top:699px;width:24px;height:24px;"><use href="#layout24"/></svg>
<div class="accl" style="top:727px;"></div>
<div class="acc" style="top:728px"></div>
<div class="acct" style="top:738px;letter-spacing:-0.45px">Functions</div>
<svg class="a" style="left:11px;top:732px;width:24px;height:24px;"><use href="#bolt24"/></svg>
<div class="accl" style="top:760px;"></div>
<div class="acc" style="top:761px"></div>
<div class="acct" style="top:771px;letter-spacing:-0.4px">Users</div>
<svg class="a" style="left:11px;top:765px;width:24px;height:24px;"><use href="#users24"/></svg>
<div class="accl" style="top:793px;"></div>
<div class="acc" style="top:794px;background:linear-gradient(#abc3e9 0px,#9ab6e1 9px,#7b9ed6 10px,#82a3d9 17px,#98b4e1 27px,#9fb9e4 32px)"></div>
<div class="acct" style="top:804px;color:#fff;letter-spacing:-0.38px">System</div>
<svg class="a" style="left:11px;top:798px;width:24px;height:24px;"><use href="#sys24"/></svg>
<div class="accl" style="top:826px;background:#5a86cc"></div>
<div class="acc" style="top:827px"></div>
<div class="acct" style="top:837px;letter-spacing:0px">Extranet</div>
<svg class="a" style="left:11px;top:831px;width:24px;height:24px;"><use href="#lock24"/></svg>
<div class="accl" style="top:859px"></div>
<div class="a" id="rstrip"></div><div class="a" id="frame"></div><div class="a" id="tab"></div>
<svg class="a" style="left:401px;top:79px;width:16px;height:16px;"><use href="#tabdoc"/></svg>
<div class="t" style="left:421px;top:80px;color:#fff;font-weight:bold;">Config.xml</div>
<div class="a" id="closebtn"></div>
<svg class="a" style="left:547px;top:81px;width:27px;height:14px"><path d="M9.5,3 L17.5,11 M17.5,3 L9.5,11" stroke="#3a3a3a" stroke-width="3.6"/><path d="M9.8,3.3 L17.2,10.7 M17.2,3.3 L9.8,10.7" stroke="#fff" stroke-width="2.2"/></svg>
<div class="a" id="savetb"></div><div class="a" id="savetbline"></div>
<svg class="a" style="left:401px;top:108px;width:16px;height:16px;"><use href="#floppy"/></svg>
<div class="t" style="left:422px;top:109px;color:#6d6d6d;letter-spacing:-0.5px;">Save</div>
<div class="a" id="instb"></div><div class="a" id="insline"></div><div class="a" id="sep"></div>
<svg class="a" style="left:401px;top:136px;width:16px;height:16px;"><use href="#plus"/></svg>
<div class="t" style="left:422px;top:137px;">Insert</div>
<svg class="a" style="left:468px;top:136px;width:16px;height:16px;"><use href="#format"/></svg>
<div class="t" style="left:489px;top:137px;">Format</div>
<div class="a" id="code"></div><div class="a" id="gutter"></div>
<div class="ln" style="top:165px">1</div>
<div class="ln" style="top:181px">2</div>
<div class="ln" style="top:197px">3</div>
<div class="ln" style="top:213px">4</div>
<div class="cl" style="top:165px"><span class="tg">&lt;TwitterBuzzFeed</span> <span class="at">autoRefresh</span>=<span class="st">"60"</span><span class="tg">&gt;</span></div>
<div class="cl" style="top:181px"> <span class="tg">&lt;Search</span> <span class="at">term</span>=<span class="st">"composite c1"</span> <span class="tg">/&gt;</span></div>
<div class="cl" style="top:197px"> <span class="tg">&lt;Search</span> <span class="at">term</span>=<span class="st">"composite cms"</span> <span class="tg">/&gt;</span></div>
<div class="cl" style="top:213px"><span class="tg">&lt;/TwitterBuzzFeed&gt;</span></div>
<div class="a" id="statusline"></div><div class="a" id="statusline2"></div>
</body></html>
